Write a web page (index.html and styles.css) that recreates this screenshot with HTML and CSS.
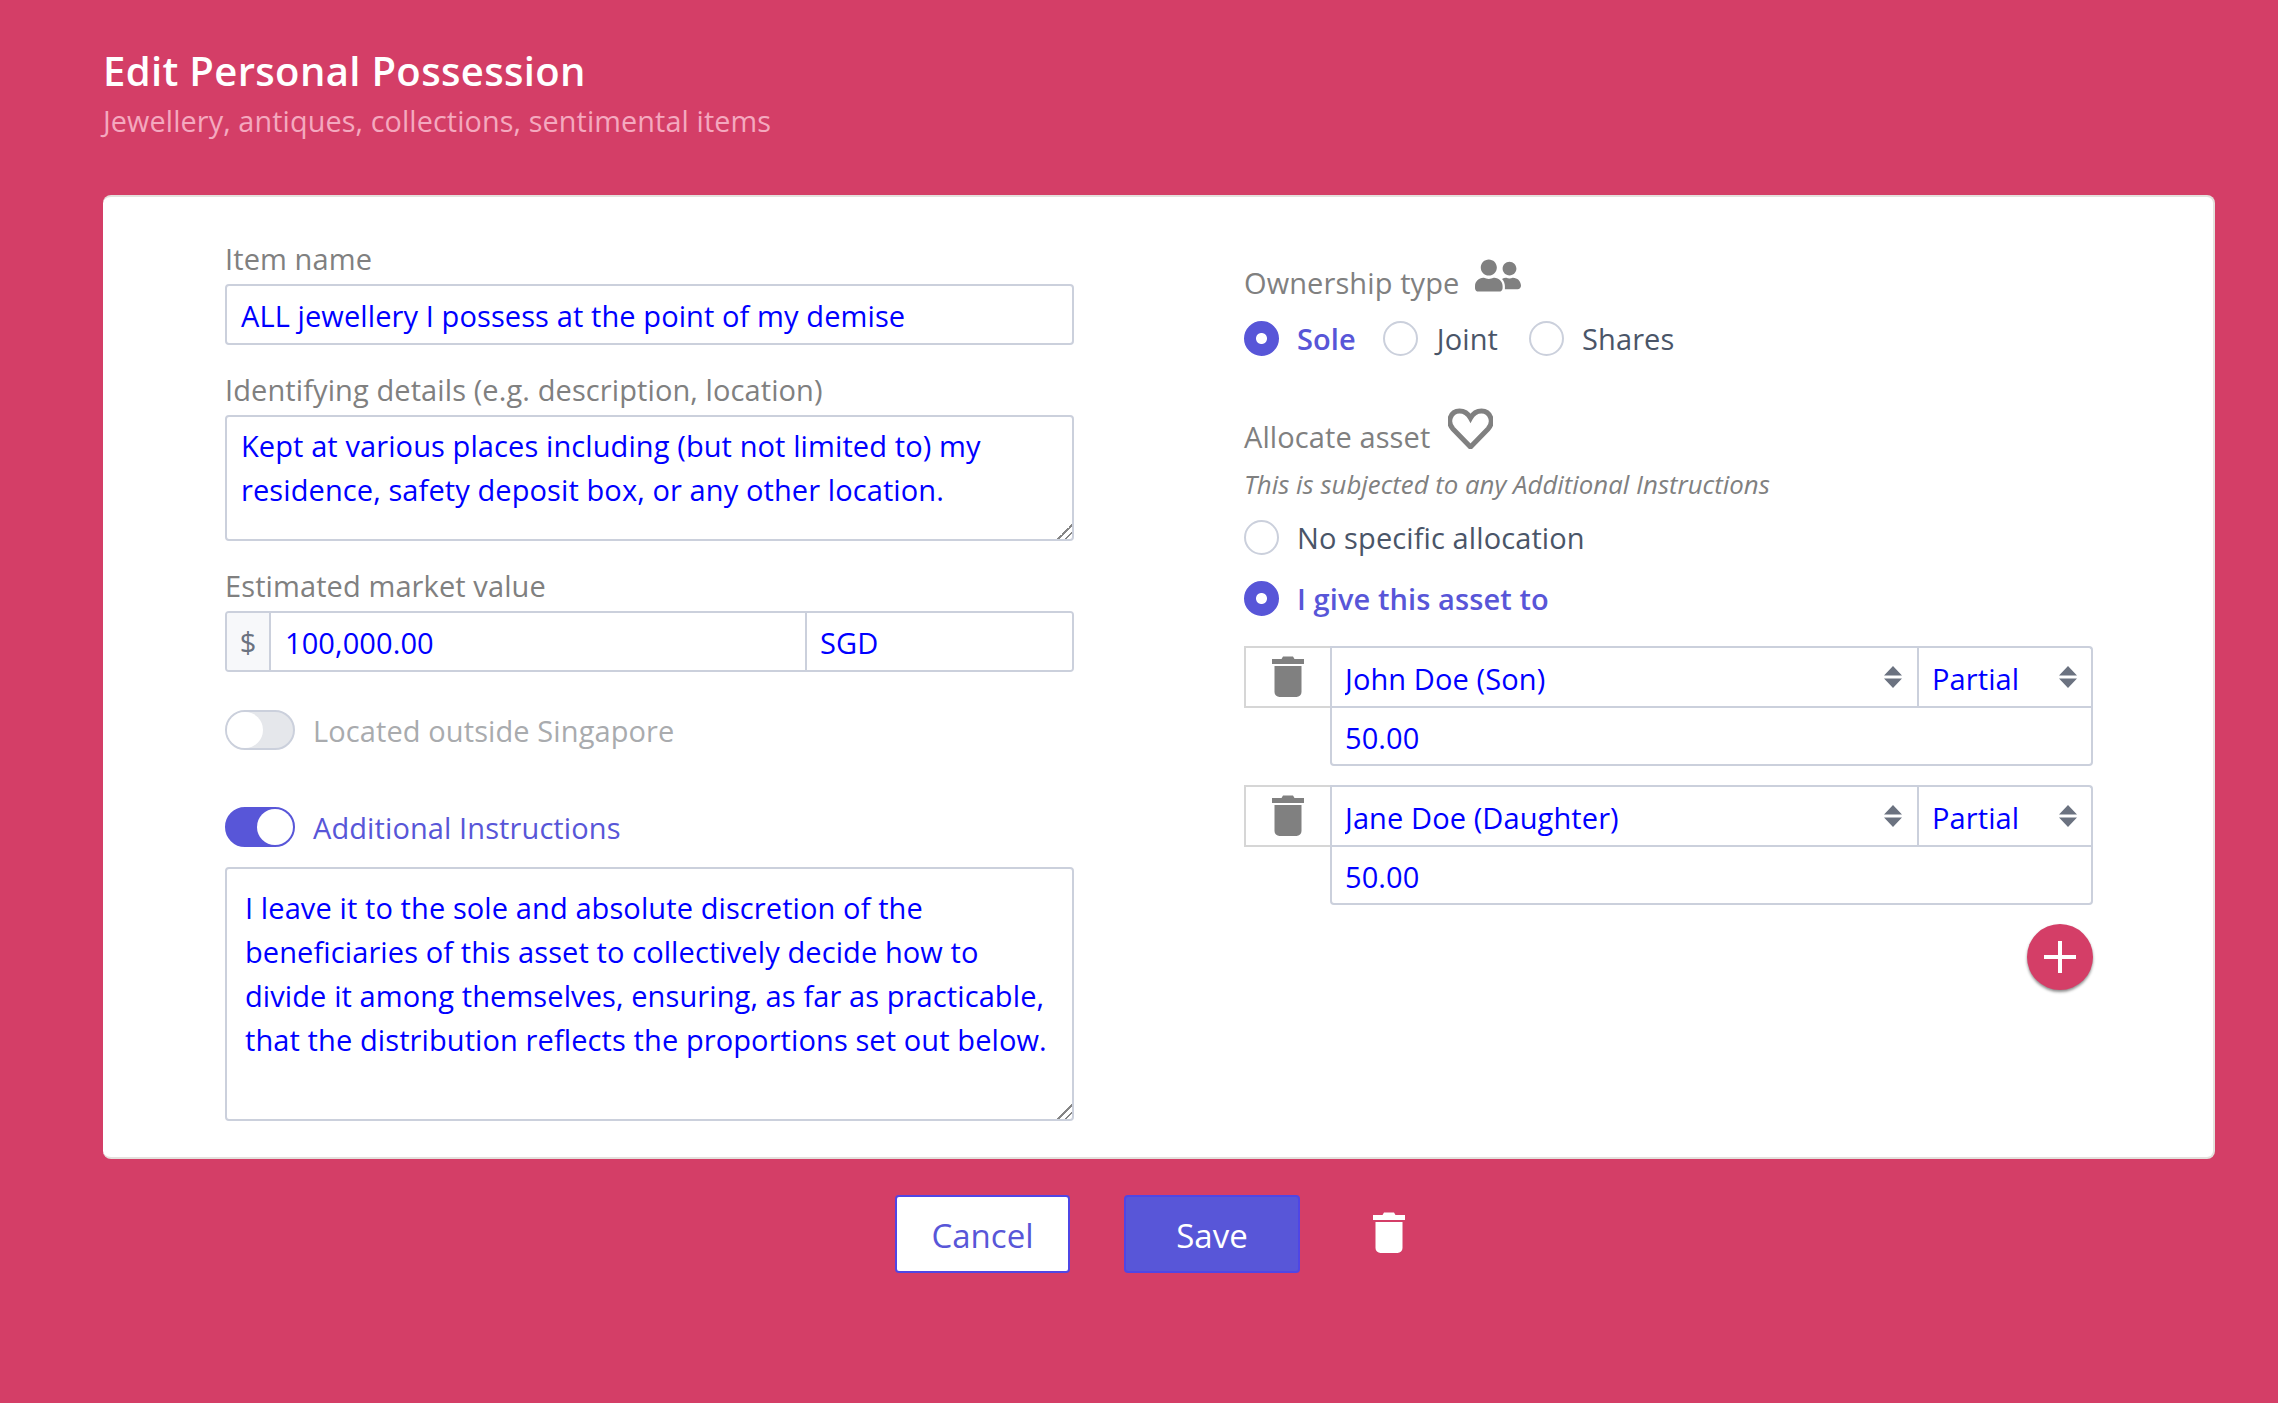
FILE: index.html
```html
<!DOCTYPE html>
<html lang="en">
<head>
<meta charset="utf-8">
<title>Edit Personal Possession</title>
<link rel="stylesheet" href="styles.css">
</head>
<body>
<header class="head">
  <h1 class="title">Edit Personal Possession</h1>
  <p class="subtitle">Jewellery, antiques, collections, sentimental items</p>
</header>
<main class="card">
  <section class="col col-left">
    <label class="label">Item name</label>
    <input class="field field-text" type="text" value="ALL jewellery I possess at the point of my demise">
    <label class="label label-next">Identifying details (e.g. description, location)</label>
    <textarea class="field area area-short">Kept at various places including (but not limited to) my residence, safety deposit box, or any other location.</textarea>
    <label class="label label-next">Estimated market value</label>
    <div class="money">
      <span class="addon">$</span>
      <input class="money-value" type="text" value="100,000.00">
      <input class="money-cur" type="text" value="SGD">
    </div>
    <div class="switch-row switch-off">
      <span class="switch"><span class="knob"></span></span>
      <span class="switch-text">Located outside Singapore</span>
    </div>
    <div class="switch-row switch-on">
      <span class="switch"><span class="knob"></span></span>
      <span class="switch-text">Additional Instructions</span>
    </div>
    <textarea class="field area area-tall">I leave it to the sole and absolute discretion of the beneficiaries of this asset to collectively decide how to divide it among themselves, ensuring, as far as practicable, that the distribution reflects the proportions set out below.</textarea>
  </section>
  <section class="col col-right">
    <div class="group-head">
      <span class="label label-flat">Ownership type</span>
      <svg class="icon-people" viewBox="0 0 640 512"><path d="M192 256c61.9 0 112-50.1 112-112S253.9 32 192 32 80 82.1 80 144s50.1 112 112 112zm76.8 32h-8.3c-20.8 10-43.9 16-68.5 16s-47.6-6-68.5-16h-8.3C51.6 288 0 339.6 0 403.2V432c0 26.5 21.5 48 48 48h288c26.5 0 48-21.5 48-48v-28.8c0-63.6-51.6-115.2-115.2-115.2zM480 256c53 0 96-43 96-96s-43-96-96-96-96 43-96 96 43 96 96 96zm48 32h-3.8c-13.9 4.8-28.6 8-44.2 8s-30.3-3.2-44.2-8H432c-20.4 0-39.2 5.9-55.7 15.4 24.4 26.3 39.7 61.2 39.7 99.8v38.4c0 2.2-.5 4.3-.6 6.4H592c26.5 0 48-21.5 48-48 0-61.9-50.1-112-112-112z"/></svg>
    </div>
    <div class="radio-line">
      <label class="radio radio-on"><input type="radio" name="own" checked><span>Sole</span></label>
      <label class="radio radio-joint"><input type="radio" name="own"><span>Joint</span></label>
      <label class="radio"><input type="radio" name="own"><span>Shares</span></label>
    </div>
    <div class="group-head group-alloc">
      <span class="label label-flat">Allocate asset</span>
      <svg class="icon-heart" viewBox="0 0 45 41"><path d="M22.5 39 L5 21 C-1.500 14 2.500 3 11.500 3 C16 3 20 5.500 22.500 10 C25 5.500 29 3 33.500 3 C42.500 3 46.500 14 40 21 Z"/></svg>
    </div>
    <p class="note">This is subjected to any Additional Instructions</p>
    <label class="radio radio-block"><input type="radio" name="alloc"><span>No specific allocation</span></label>
    <label class="radio radio-on radio-block radio-give"><input type="radio" name="alloc" checked><span>I give this asset to</span></label>

    <div class="share">
      <div class="share-top">
        <button class="share-del" type="button" aria-label="Remove">
          <svg class="icon-trash" viewBox="0 0 32 41"><path d="M9.500 3 11 .5h10L22.500 3H32v5H0V3zM2.500 10h27v26a5 5 0 0 1-5 5h-17a5 5 0 0 1-5-5z"/></svg>
        </button>
        <div class="picks">
          <div class="pick pick-name">
            <select><option>John Doe (Son)</option></select>
            <svg class="caret" viewBox="0 0 18 22"><path d="M9 0 18 9.500H0zM9 22 0 12.500h18z"/></svg>
          </div>
          <div class="pick pick-kind">
            <select><option>Partial</option></select>
            <svg class="caret" viewBox="0 0 18 22"><path d="M9 0 18 9.500H0zM9 22 0 12.500h18z"/></svg>
          </div>
        </div>
      </div>
      <input class="share-amount" type="text" value="50.00">
    </div>
    <div class="share">
      <div class="share-top">
        <button class="share-del" type="button" aria-label="Remove">
          <svg class="icon-trash" viewBox="0 0 32 41"><path d="M9.500 3 11 .5h10L22.500 3H32v5H0V3zM2.500 10h27v26a5 5 0 0 1-5 5h-17a5 5 0 0 1-5-5z"/></svg>
        </button>
        <div class="picks">
          <div class="pick pick-name">
            <select><option>Jane Doe (Daughter)</option></select>
            <svg class="caret" viewBox="0 0 18 22"><path d="M9 0 18 9.500H0zM9 22 0 12.500h18z"/></svg>
          </div>
          <div class="pick pick-kind">
            <select><option>Partial</option></select>
            <svg class="caret" viewBox="0 0 18 22"><path d="M9 0 18 9.500H0zM9 22 0 12.500h18z"/></svg>
          </div>
        </div>
      </div>
      <input class="share-amount" type="text" value="50.00">
    </div>
    <div class="add-line">
      <button class="add" type="button" aria-label="Add">
        <svg class="icon-plus" viewBox="0 0 32 32"><path d="M16 0v32M0 16h32"/></svg>
      </button>
    </div>
  </section>
</main>
<footer class="actions">
  <button class="btn btn-cancel" type="button">Cancel</button>
  <button class="btn btn-save" type="button">Save</button>
  <button class="btn-del" type="button" aria-label="Delete">
    <svg class="icon-trash icon-trash-white" viewBox="0 0 32 41"><path d="M9.500 3 11 .5h10L22.500 3H32v5H0V3zM2.500 10h27v26a5 5 0 0 1-5 5h-17a5 5 0 0 1-5-5z"/></svg>
  </button>
</footer>
</body>
</html>
```
FILE: styles.css
```css
* { box-sizing: border-box; }
html, body { margin: 0; height: 100%; }
body {
  background: #d43e67;
  font-family: "Open Sans", "Noto Sans", sans-serif;
  font-size: 29px;
  letter-spacing: 0.1px;
  color: #4a5568;
  padding: 47px 63px 0 103px;
  overflow: hidden;
}
input, textarea, select, button {
  font: inherit;
  letter-spacing: inherit;
  margin: 0;
  outline: none;
}
input[type="text"] { padding-top: 2px; }
.head { height: 148px; }
.title {
  margin: 0;
  font-size: 40px;
  line-height: 48px;
  font-weight: 600;
  color: #fff;
  letter-spacing: 0.35px;
}
.subtitle {
  margin: 5px 0 0;
  font-size: 28.800px;
  line-height: 42px;
  color: #f4a9bf;
}
.card {
  height: 964px;
  background: #fff;
  border: 2px solid #e4e1dd;
  border-width: 2px 2px 2px 0;
  border-radius: 8px;
  padding: 39px 120px 0 122px;
  display: grid;
  grid-template-columns: 849px 849px;
  column-gap: 170px;
  align-items: start;
}
.col { display: flex; flex-direction: column; min-width: 0; }
.label { display: block; color: #808080; line-height: 46px; padding-bottom: 2px; }
.label-flat { padding-bottom: 0; }
.label-next { margin-top: 22px; }
.field {
  display: block;
  width: 100%;
  border: 2px solid #cbd0dc;
  border-radius: 4px;
  color: #0000ff;
  background: #fff;
  padding: 0 14px;
  line-height: 44px;
}
.field-text { height: 61px; }
.area { resize: vertical; padding-top: 7px; }
.area::-webkit-resizer {
  background: linear-gradient(135deg, transparent 0 50%, #858585 50% 57%, transparent 57% 76%, #858585 76% 83%, transparent 83%);
}
.area-short { height: 126px; }
.area-tall { height: 254px; padding: 17px 18px 0; }
.money {
  display: flex;
  height: 61px;
  border: 2px solid #cbd0dc;
  border-radius: 4px;
  overflow: hidden;
}
.addon {
  width: 44px;
  flex: none;
  background: #f7f8fa;
  border-right: 2px solid #cbd0dc;
  color: #6b7280;
  text-align: center;
  line-height: 57px;
}
.money-value, .money-cur {
  border: 0;
  color: #0000ff;
  padding: 2px 14px 0;
  min-width: 0;
}
.money-value { width: 536px; flex: none; border-right: 2px solid #cbd0dc; }
.money-cur { flex: 1; padding: 2px 13px 0; }
.switch-row {
  display: flex;
  align-items: center;
  gap: 18px;
  height: 40px;
}
.switch-off { margin-top: 38px; color: #a9abae; }
.switch-on { margin-top: 57px; margin-bottom: 20px; color: #5856d8; }
.switch {
  width: 70px;
  height: 40px;
  flex: none;
  display: flex;
  border-radius: 20px;
  border: 2px solid #cbd0dc;
  background: #e5e7eb;
}
.switch-on .switch {
  justify-content: flex-end;
  background: #5856d8;
  border-color: #5856d8;
}
.knob { width: 36px; height: 36px; border-radius: 50%; background: #fff; }
.group-head { display: flex; align-items: flex-end; }
.icon-people { width: 46px; height: 37px; margin: 0 0 12px 16px; fill: #808080; }
.col-right { padding-top: 21px; }
.radio-line { display: flex; margin-top: 14px; }
.radio {
  display: flex;
  align-items: center;
  height: 36px;
  gap: 18px;
  margin-right: 27px;
  color: #4a5568;
}
.radio-joint { margin-right: 31px; gap: 19px; }
.radio input {
  appearance: none;
  -webkit-appearance: none;
  width: 35px;
  height: 35px;
  flex: none;
  border-radius: 50%;
  border: 2px solid #cbd0dc;
  background: #fff;
}
.radio input:checked {
  border-color: #5856d8;
  background: radial-gradient(circle, #fff 0 5px, #5856d8 6px);
}
.radio-on { color: #5856d8; font-weight: 600; }
.group-alloc { margin-top: 52px; }
.icon-heart {
  width: 45px;
  height: 41px;
  margin: 0 0 11px 18px;
  fill: none;
  stroke: #808080;
  stroke-width: 5;
}
.note {
  margin: 4px 0 0;
  color: #808080;
  font-size: 25.800px;
  font-style: italic;
  line-height: 40px;
  letter-spacing: 0;
}
.radio-block { margin: 15px 0 0; }
.radio-give { margin-top: 25px; }
.share { margin-top: 30px; }
.share + .share { margin-top: 19px; }
.share-top { display: flex; height: 62px; }
.share-del {
  width: 86px;
  flex: none;
  padding: 8px 0 0;
  background: #fff;
  border: 2px solid #d6d6d6;
  border-right: 0;
  display: flex;
  justify-content: center;
  align-items: flex-start;
}
.picks {
  flex: 1;
  display: flex;
  border: 2px solid #cbd0dc;
  border-bottom-width: 0;
  border-top-right-radius: 4px;
  min-width: 0;
}
.icon-trash { width: 32px; height: 41px; fill: #808080; }
.icon-trash-white { fill: #fff; }
.pick { position: relative; display: flex; }
.pick-name { width: 587px; flex: none; border-right: 2px solid #cbd0dc; }
.pick-kind { flex: 1; }
.pick select {
  appearance: none;
  -webkit-appearance: none;
  width: 100%;
  border: 0;
  background: transparent;
  color: #0000ff;
  padding: 0 14px 0 13px;
}
.caret {
  position: absolute;
  right: 15px;
  top: 18px;
  width: 18px;
  height: 22px;
  fill: #6b7280;
}
.pick-kind .caret { right: 14px; }
.share-amount {
  display: block;
  width: 763px;
  height: 60px;
  margin: -2px 0 0 86px;
  position: relative;
  border: 2px solid #cbd0dc;
  border-radius: 0 0 4px 4px;
  color: #0000ff;
  padding: 0 13px;
}
.add-line { display: flex; justify-content: flex-end; margin-top: 19px; }
.add {
  width: 66px;
  height: 66px;
  padding: 0;
  border: 0;
  border-radius: 50%;
  background: #d43e67;
  box-shadow: 0 2px 3px rgba(0,0,0,.45);
  display: flex;
  align-items: center;
  justify-content: center;
}
.icon-plus { width: 32px; height: 32px; fill: none; stroke: #fff; stroke-width: 4; }
.actions {
  display: flex;
  justify-content: flex-start;
  padding-left: 792px;
  margin-top: 36px;
  align-items: flex-start;
}
.btn {
  width: 175px;
  height: 78px;
  border-radius: 4px;
  border: 2px solid #4f46e5;
  font-size: 33px;
  letter-spacing: 0;
  padding: 2px 0 0;
}
.btn-cancel { background: #fff; color: #5856d8; }
.btn-save { background: #5856d8; color: #fff; margin-left: 54px; width: 176px; }
.btn-del {
  margin: 17px 0 0 73px;
  padding: 0;
  border: 0;
  background: none;
  display: flex;
}
```
